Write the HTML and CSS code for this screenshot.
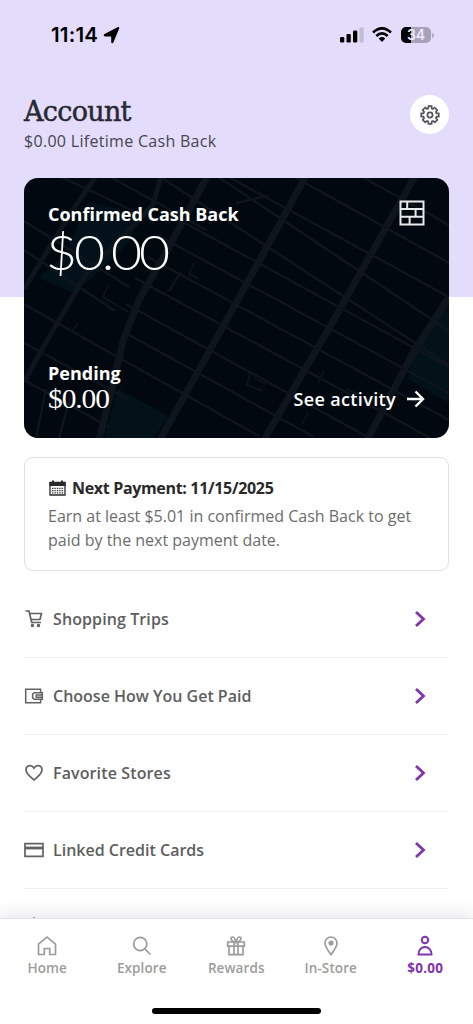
FILE: index.html
```html
<!DOCTYPE html>
<html lang="en">
<head>
<meta charset="utf-8">
<title>Account</title>
<link rel="stylesheet" href="styles.css">
</head>
<body>
<div class="app">
  <header class="hero">
    <div class="status">
      <div class="clock"><span class="time">11:14</span>
        <svg width="17" height="17" viewBox="0 0 17 17"><path d="M15.400 1.200 9.800 14.900Q9.200 16 9 14.800V8.600H2.200Q.8 8.300 2 7.600L14.800 1Q15.700.4 15.400 1.200Z" stroke="#000" stroke-width="1.600" stroke-linejoin="round"/></svg>
      </div>
      <div class="signals">
        <svg width="25" height="16" viewBox="0 0 25 16"><rect x="0" y="10" width="4.300" height="5.500" rx="1.200"/><rect x="6.500" y="7" width="4.300" height="8.500" rx="1.200"/><rect x="13" y="3.500" width="4.300" height="12" rx="1.200"/><rect x="19.400" y=".5" width="4.300" height="15" rx="1.200" fill="#c2bdd6"/></svg>
        <svg width="20" height="16" viewBox="0 0 20 16" fill="none" stroke="#000" stroke-width="2.600"><path d="M1 5.500Q10-2.800 19 5.500M4.300 9Q10 3.700 15.700 9"/><path d="M6.700 11.500Q10 8.600 13.300 11.500L10 15Z" fill="#000" stroke="none"/></svg>
        <div class="battery"><span class="level">34</span><i class="tip"></i></div>
      </div>
    </div>
    <div class="heading">
      <div><h1>Account</h1><p class="lifetime">$0.00 Lifetime Cash Back</p></div>
      <button class="settings" aria-label="Settings">
        <svg width="20" height="20" viewBox="0 0 20 20" fill="none" stroke="#55545c" stroke-width="1.700" stroke-linejoin="round"><path d="M8.300 1.200h3.400v2.200l1.300.6L14.600 2.500 17.300 5.200 15.900 6.900l.6 1.400h2.300v3.400h-2.300l-.6 1.400 1.500 1.700-2.600 2.600-1.800-1.500-1.300.6v2.300H8.300v-2.300L7 15.900l-1.700 1.500-2.600-2.600 1.400-1.700-.6-1.400H1.200V8.300h2.300l.6-1.400-1.500-1.700 2.700-2.700L7 4l1.300-.6Z"/><circle cx="10" cy="10" r="2.600"/></svg>
      </button>
    </div>
  </header>
  <main>
    <section class="balance">
      <svg class="map" viewBox="0 0 425 260" fill="none" stroke="#0e151d" stroke-linejoin="round">
        <path d="M64 24 118 36 103 66 83 86 50 115 15 100 42 75Z" fill="#03121a" stroke="none"/>
        <path d="M94 211 145 238 130 260H80ZM425 126 389 175 384 201 425 225Z" fill="#031118" stroke="none"/>
        <g stroke-width="7"><path d="M282-2 212 125 136 262M391-2 312 138 240 262M184-3 145 69 115 122 99 163 90 202 75 262M425 119 389 175 343 262"/></g>
        <g stroke-width="5"><path d="M72-2 46 36 0 111M137-2 129 27 62 96 21 166 0 204"/></g>
        <g stroke-width="2.400"><path d="M335-3 425 47M267-3 425 85M190-9 425 119M154-28 425 153M138 0 425 187M139 33 425 189M135 58 425 215M124 79 425 242M111 100 410 262M102 126 349 262M98 153 290 259M90 177 235 258M0 43 105 109M83-3 182 52M33-3 118 37M0 72 91 133M0 126 102 184M0 165 104 221M0 202 85 249M22 211 12 260M46 220 35 260M157 94 145 113M212 25 244 18"/></g>
        <path d="M84 107 79 119 104 134M54 144 49 153M170 85 165 96 175 101M227 193 223 207 239 213M230 200 242 206M278 246 284 235M300 193 294 205M322 211l12 5" stroke-width="1.500"/>
      </svg>
      <div class="row top"><h2>Confirmed Cash Back</h2>
        <svg width="26" height="26" viewBox="0 0 26 26" fill="none" stroke="#e9eaeb" stroke-width="2"><path d="M1.500 1.500h23v23h-23ZM1.500 9h23M1.500 16.700h23M8.200 1.500V9M16.600 9v7.700M10.600 16.700v7.800"/></svg>
      </div>
      <div class="amount">$0.00</div>
      <div class="row bottom">
        <div><h2 class="pending">Pending</h2><div class="waiting">$0.00</div></div>
        <a class="activity"><span>See activity</span><svg width="19" height="18" viewBox="0 0 19 18" fill="none" stroke="#fff" stroke-width="2.400"><path d="M1 9h16M9.500 1.500 17 9l-7.500 7.500"/></svg></a>
      </div>
    </section>
    <section class="notice">
      <div class="notice-title"><svg width="17" height="16" viewBox="0 0 17 16"><path d="M1 2.500h15v12.500H1Z" fill="#fff" stroke="#292929" stroke-width="1.300"/><path d="M.4 2H3V.5h2V2h7V.5h2V2h2.600v4H.4Z" fill="#292929"/><path d="M3 8.300h11M3 10.600h11M3 12.900h11" stroke="#333" stroke-width="1.200" stroke-dasharray="1.400 1"/></svg><b>Next Payment: 11/15/2025</b></div>
      <p>Earn at least $5.01 in confirmed Cash Back to get paid by the next payment date.</p>
    </section>
    <nav class="menu">
      <a class="item"><svg width="20" height="20" viewBox="0 0 20 20" fill="none" stroke-width="1.700"><path d="M1.500 2H5l2.700 11.500H17M5.500 4.500h12L16 10.500H7"/><circle cx="8.400" cy="16.500" r=".9"/><circle cx="14.500" cy="16.500" r=".9"/></svg><span class="trips">Shopping Trips</span><svg class="chev" width="12" height="18" viewBox="0 0 12 18"><path d="m2 2 7.500 7L2 16"/></svg></a>
      <a class="item"><svg width="20" height="20" viewBox="0 0 20 20" fill="none" stroke-width="1.500"><path d="M16.600 6.800V3.200H1.700v13.600h14.900V13.200M18.300 6.800H10.200L8.600 8.200v3.600l1.600 1.400h8.100ZM12.300 9h6v2.200h-6Z"/></svg><span class="paid">Choose How You Get Paid</span><svg class="chev" width="12" height="18" viewBox="0 0 12 18"><path d="m2 2 7.500 7L2 16"/></svg></a>
      <a class="item"><svg width="20" height="20" viewBox="0 0 20 20" fill="none" stroke-width="1.700"><path d="M10 17C7 14 2 11.200 2 6.700 2 2.300 7.600 1 10 5.200 12.400 1 18 2.300 18 6.700 18 11.200 13 14 10 17Z"/></svg><span class="stores">Favorite Stores</span><svg class="chev" width="12" height="18" viewBox="0 0 12 18"><path d="m2 2 7.500 7L2 16"/></svg></a>
      <a class="item"><svg width="20" height="20" viewBox="0 0 20 20" fill="none" stroke-width="1.700"><path d="M1 3.700h18v12.600H1Z"/><path d="M1 8h18" stroke-width="2.800"/></svg><span class="cards">Linked Credit Cards</span><svg class="chev" width="12" height="18" viewBox="0 0 12 18"><path d="m2 2 7.500 7L2 16"/></svg></a>
      <a class="item next"><svg width="20" height="20" viewBox="0 0 20 20" fill="none" stroke-width="1.500"><path d="m10 1 8 8v10H2V9Z"/></svg></a>
    </nav>
  </main>
  <footer class="tabbar">
    <nav class="tabs">
      <a><svg width="22" height="22" viewBox="0 0 22 22"><path d="M2.500 9.200 11 2l8.500 7.200v10.300h-5.800v-6h-5.400v6H2.500Z"/></svg><span>Home</span></a>
      <a><svg width="22" height="22" viewBox="0 0 22 22"><circle cx="9.200" cy="9" r="6.600"/><path d="m14 14 5.500 5.500"/></svg><span>Explore</span></a>
      <a><svg width="22" height="22" viewBox="0 0 22 22"><path d="M2.700 7h16.600v4.200H2.700ZM4 11.200h14v8.500H4ZM9 7v12.500M13 7v12.500M11 7C6 7 4.800 2.200 7.200 2c2.200-.2 3.200 2.700 3.800 5 .6-2.300 1.600-5.200 3.800-5C17.200 2.200 16 7 11 7"/></svg><span>Rewards</span></a>
      <a><svg width="22" height="22" viewBox="0 0 22 22"><path d="M11 19.800C8.500 16 5 12 5 8a6 6 0 0 1 12 0C17 12 13.500 16 11 19.800Z"/><circle cx="11" cy="8" r="1.700" fill="#9c9c9c"/></svg><span>In-Store</span></a>
      <a class="current"><svg width="22" height="22" viewBox="0 0 22 22"><circle cx="11" cy="5" r="3.200"/><path d="M4.500 19.500c0-10 13-10 13 0Z"/></svg><span>$0.00</span></a>
    </nav>
    <div class="handle"></div>
  </footer>
</div>
</body>
</html>
```
FILE: styles.css
```css
* { box-sizing: border-box; }
body { margin: 0; background: #fff; font-family: "Open Sans", "Noto Sans", sans-serif; }
h1, h2, p { margin: 0; }
svg { display: block; flex: none; }
span, b { white-space: nowrap; }
.app { display: flex; flex-direction: column; height: 1024px; overflow: hidden; }
.hero { height: 297px; flex: none; background: #e3ddfb; }
.status { height: 70px; padding: 0 42px 0 51px; display: flex; align-items: center; justify-content: space-between; }
.clock { display: flex; align-items: center; gap: 5px; }
.time { font: 600 20.5px/24px Inter, sans-serif; letter-spacing: .2px; }
.signals { display: flex; align-items: center; gap: 9px; }
.signals svg:first-child { margin-right: -2px; }
.battery { position: relative; width: 30px; height: 16px; border-radius: 5px; background: linear-gradient(90deg, #000 35%, #a7a2b8 35%); }
.level { display: block; text-align: center; color: #eeeaff; font: 600 14px/16px Inter, sans-serif; }
.tip { position: absolute; right: -3px; top: 6px; width: 2px; height: 5px; border-radius: 0 2px 2px 0; background: #b2adc4; }
.heading { padding: 25px 24px 0; display: flex; justify-content: space-between; }
h1 { color: #292733; font: 400 27px/34px "DejaVu Serif", serif; letter-spacing: -.7px; -webkit-text-stroke: .5px #292733; }
.lifetime { color: #47454f; font-size: 16px; line-height: 24px; letter-spacing: .3px; }
.settings { border: 0; padding: 0; width: 39px; height: 39px; border-radius: 50%; background: #fff; display: grid; place-items: center; }
main { margin-top: -119px; padding: 0 24px; flex: 1; min-height: 0; position: relative; }
.balance { position: relative; height: 260px; border-radius: 14px; overflow: hidden; background: #01080f; color: #fff; padding: 22px 24px 0; display: flex; flex-direction: column; }
.map { position: absolute; inset: 0; width: 425px; height: 260px; }
.row { position: relative; display: flex; justify-content: space-between; }
h2 { font-size: 18px; line-height: 28px; font-weight: 700; white-space: nowrap; }
.top h2 { height: 26px; }
.amount { position: relative; width: max-content; margin: 3px 0 0 -2px; font: 300 47px/46px Lato, sans-serif; letter-spacing: -2.8px; transform: scaleX(1.14); transform-origin: 0 50%; }
.bottom { margin-top: 84px; align-items: flex-end; }
.waiting { width: max-content; font: 400 27px/24px "Liberation Serif", serif; letter-spacing: -1px; transform: scaleX(1.09); transform-origin: 0 50%; }
.activity { display: flex; align-items: center; gap: 10px; font-size: 18px; line-height: 24px; font-weight: 600; letter-spacing: .35px; }
.notice { margin-top: 19px; height: 114px; border: 1px solid #dfdfe3; border-radius: 9px; padding: 17px 24px 18px; }
.notice-title { display: flex; align-items: center; gap: 6px; height: 26px; color: #292929; font-size: 16px; letter-spacing: -.33px; }
.notice p { color: #6c6c6c; font-size: 16px; line-height: 24px; margin: 3px 0 0 -1px; }
.menu { padding-top: 10px; }
.item { height: 77px; border-bottom: 1px solid #f0f0f0; display: flex; align-items: center; gap: 9px; color: #5e5e5e; font-size: 16px; font-weight: 600; }
.item > svg:first-child { stroke: #626262; }
.item.next { align-items: flex-start; padding-top: 28px; }
.trips { letter-spacing: .1px; }
.stores { letter-spacing: .12px; }
.chev { margin: 0 23px 0 auto; fill: none; stroke: #7e35ae; stroke-width: 2.8; }
.tabbar { height: 106px; flex: none; position: relative; background: #fff; border-top: 1px solid #e2e2e7; box-shadow: 0 -4px 16px rgba(50, 50, 80, .11); }
.tabs { display: flex; padding-top: 16px; }
.tabs a { width: 94.5px; display: flex; flex-direction: column; align-items: center; color: #9c9c9c; font-size: 13.5px; line-height: 20px; font-weight: 600; letter-spacing: .1px; gap: 1px; }
.tabs svg { fill: none; stroke: #9c9c9c; stroke-width: 1.7; }
.tabs .current { color: #7e35ae; font-weight: 700; letter-spacing: .3px; }
.tabs .current svg { stroke: #7e35ae; stroke-width: 2; }
.handle { width: 169px; height: 6px; border-radius: 3px; background: #000; margin: 30px auto 0; }
```
